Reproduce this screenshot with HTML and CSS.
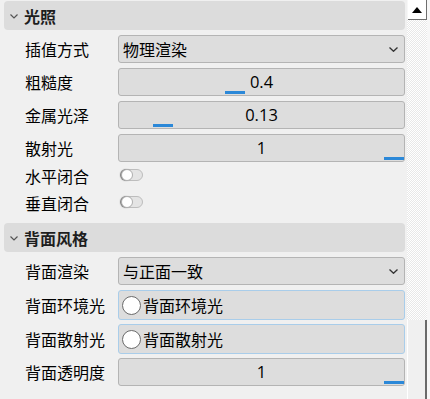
FILE: index.html
```html
<!DOCTYPE html>
<html lang="zh-CN">
<head>
    <meta charset="UTF-8">
    <title>属性面板</title>
    <link rel="stylesheet" href="styles.css">
</head>
<body>
    <div class="page">
        <div class="panel">
            <!-- 光照 -->
            <div class="group-head">
                <svg class="chev" width="8" height="5" viewBox="0 0 8 5"><path d="M0.5 0.5 L4 4 L7.5 0.5" fill="none" stroke="#555" stroke-width="1.2"/></svg>
                <span>光照</span>
            </div>
            <div class="row">
                <label>插值方式</label>
                <div class="field select">
                    <span>物理渲染</span>
                    <svg class="arrow" width="9" height="5" viewBox="0 0 9 5"><path d="M0.5 0.5 L4.5 4.3 L8.5 0.5" fill="none" stroke="#333" stroke-width="1.3"/></svg>
                </div>
            </div>
            <div class="row">
                <label>粗糙度</label>
                <div class="field slider"><span>0.4</span><i class="knob" style="left: calc((100% - 20px) * 0.4)"></i></div>
            </div>
            <div class="row">
                <label>金属光泽</label>
                <div class="field slider"><span>0.13</span><i class="knob" style="left: calc((100% - 20px) * 0.13)"></i></div>
            </div>
            <div class="row">
                <label>散射光</label>
                <div class="field slider"><span>1</span><i class="knob" style="left: calc((100% - 20px) * 1)"></i></div>
            </div>
            <div class="row toggle-row">
                <label>水平闭合</label>
                <div class="toggle"></div>
            </div>
            <div class="row toggle-row">
                <label>垂直闭合</label>
                <div class="toggle"></div>
            </div>

            <!-- 背面风格 -->
            <div class="group-head second">
                <svg class="chev" width="8" height="5" viewBox="0 0 8 5"><path d="M0.5 0.5 L4 4 L7.5 0.5" fill="none" stroke="#555" stroke-width="1.2"/></svg>
                <span>背面风格</span>
            </div>
            <div class="row">
                <label>背面渲染</label>
                <div class="field select">
                    <span>与正面一致</span>
                    <svg class="arrow" width="9" height="5" viewBox="0 0 9 5"><path d="M0.5 0.5 L4.5 4.3 L8.5 0.5" fill="none" stroke="#333" stroke-width="1.3"/></svg>
                </div>
            </div>
            <div class="row">
                <label>背面环境光</label>
                <div class="field radio"><i class="dot"></i><span>背面环境光</span></div>
            </div>
            <div class="row tight">
                <label>背面散射光</label>
                <div class="field radio"><i class="dot"></i><span>背面散射光</span></div>
            </div>
            <div class="row tight">
                <label>背面透明度</label>
                <div class="field slider"><span>1</span><i class="knob" style="left: calc((100% - 20px) * 1)"></i></div>
            </div>
        </div>

        <div class="scrollbar">
            <div class="sb-up"><i></i></div>
            <div class="sb-track"></div>
            <div class="sb-thumb"></div>
        </div>
    </div>
</body>
</html>
```

FILE: styles.css
```css
body {
    margin: 0;
    background-color: #f0f0f0;
    font-family: "Noto Sans CJK SC", "Microsoft YaHei", sans-serif;
    font-size: 16px;
    color: #000;
}
.page {
    display: flex;
    height: 399px;
    overflow: hidden;
}
.panel {
    width: 405px;
    padding-right: 2px;
    flex-shrink: 0;
}
.group-head {
    display: flex;
    align-items: center;
    height: 29px;
    margin: 1px 0 0 4px;
    padding-left: 6px;
    background-color: #dcdcdc;
    border-radius: 4px;
    font-weight: bold;
    color: #1e1e1e;
    line-height: 1;
}
.group-head.second {
    margin-top: 7px;
}
.group-head .chev {
    margin-right: 6px;
    margin-top: 1px;
}
.row {
    display: grid;
    grid-template-columns: 118px 1fr;
    align-items: center;
    margin-top: 5px;
    line-height: 1;
}
.row.tight {
    margin-top: 4px;
}
.row label {
    padding-left: 25px;
    white-space: nowrap;
}
.field {
    position: relative;
    box-sizing: border-box;
    height: 28px;
    display: flex;
    align-items: center;
    background-color: #dddddd;
    border: 1px solid #b4b4b4;
    border-radius: 3px;
}
.select {
    padding-left: 4px;
    justify-content: space-between;
}
.select .arrow {
    margin-right: 6px;
}
.slider {
    justify-content: center;
}
.slider span {
    font-family: "Open Sans", "Noto Sans", sans-serif;
    font-size: 16.5px;
}
.knob {
    position: absolute;
    bottom: 1px;
    width: 20px;
    height: 3px;
    background-color: #2b88d8;
}
.radio {
    height: 30px;
    border-color: #a9cdea;
    padding-left: 3px;
}
.dot {
    box-sizing: border-box;
    width: 19px;
    height: 19px;
    margin-right: 2px;
    border: 1.5px solid #6b6b6b;
    border-radius: 50%;
    background-color: #fff;
}
.toggle-row {
    height: 27px;
    margin-top: 0;
}
.toggle-row:first-of-type {
    margin-top: 3px;
}
.toggle {
    position: relative;
    box-sizing: border-box;
    width: 22px;
    height: 12px;
    margin-left: 3px;
    margin-top: -1px;
    border: 1px solid #bdbdbd;
    border-radius: 6px;
    background-color: #e4e4e4;
}
.toggle::after {
    content: "";
    position: absolute;
    left: -1px;
    top: -1px;
    box-sizing: border-box;
    width: 12px;
    height: 12px;
    border-radius: 50%;
    background-color: #fff;
    border: 1px solid #b0b0b0;
    box-shadow: -1px 0 1px #777;
}
.scrollbar {
    position: relative;
    width: 23px;
    background-color: #f7f7f7;
}
.sb-up {
    box-sizing: border-box;
    width: 19px;
    height: 20px;
    margin-left: 1px;
    display: flex;
    align-items: center;
    justify-content: center;
    background-color: #fff;
    border-right: 1px solid #6e6e6e;
    border-bottom: 1px solid #6e6e6e;
}
.sb-up i {
    width: 0;
    height: 0;
    border-left: 5px solid transparent;
    border-right: 5px solid transparent;
    border-bottom: 6px solid #000;
}
.sb-track {
    width: 20px;
    height: 300px;
    background-color: #f4f4f4;
    background-image: repeating-conic-gradient(#ffffff 0 25%, #e8e8e8 0 50%);
    background-size: 2px 2px;
}
.sb-thumb {
    box-sizing: border-box;
    width: 20px;
    height: 80px;
    background-color: #f0f0f0;
    border-left: 1px solid #fff;
    border-right: 2px solid #6a6a6a;
}
```
